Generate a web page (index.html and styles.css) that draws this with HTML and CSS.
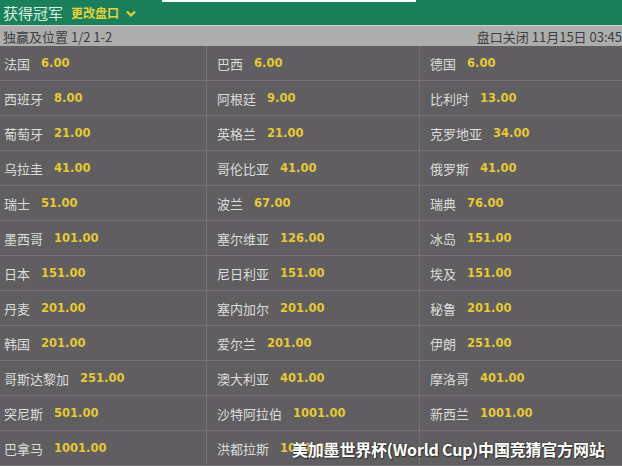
FILE: index.html
```html
<!DOCTYPE html>
<html lang="zh">
<head>
<meta charset="utf-8">
<link rel="stylesheet" href="styles.css">
</head>
<body>
<div class="page">
  <div class="topbar">
    <span class="title">获得冠军</span>
    <span class="change">更改盘口</span>
    <svg class="chev" width="10" height="7" viewBox="0 0 10 7"><path d="M1 1.5 L5 5.5 L9 1.5" fill="none" stroke="#e8d23a" stroke-width="2.2"/></svg>
    <span class="whiteline"></span>
  </div>
  <div class="subbar">
    <span>独赢及位置 1/2 1-2</span>
    <span class="close">盘口关闭 11月15日 03:45</span>
  </div>
  <div class="grid">
    <div class="cell"><span class="n">法国</span><span class="o">6.00</span></div>
    <div class="cell"><span class="n">巴西</span><span class="o">6.00</span></div>
    <div class="cell"><span class="n">德国</span><span class="o">6.00</span></div>
    <div class="cell"><span class="n">西班牙</span><span class="o">8.00</span></div>
    <div class="cell"><span class="n">阿根廷</span><span class="o">9.00</span></div>
    <div class="cell"><span class="n">比利时</span><span class="o">13.00</span></div>
    <div class="cell"><span class="n">葡萄牙</span><span class="o">21.00</span></div>
    <div class="cell"><span class="n">英格兰</span><span class="o">21.00</span></div>
    <div class="cell"><span class="n">克罗地亚</span><span class="o">34.00</span></div>
    <div class="cell"><span class="n">乌拉圭</span><span class="o">41.00</span></div>
    <div class="cell"><span class="n">哥伦比亚</span><span class="o">41.00</span></div>
    <div class="cell"><span class="n">俄罗斯</span><span class="o">41.00</span></div>
    <div class="cell"><span class="n">瑞士</span><span class="o">51.00</span></div>
    <div class="cell"><span class="n">波兰</span><span class="o">67.00</span></div>
    <div class="cell"><span class="n">瑞典</span><span class="o">76.00</span></div>
    <div class="cell"><span class="n">墨西哥</span><span class="o">101.00</span></div>
    <div class="cell"><span class="n">塞尔维亚</span><span class="o">126.00</span></div>
    <div class="cell"><span class="n">冰岛</span><span class="o">151.00</span></div>
    <div class="cell"><span class="n">日本</span><span class="o">151.00</span></div>
    <div class="cell"><span class="n">尼日利亚</span><span class="o">151.00</span></div>
    <div class="cell"><span class="n">埃及</span><span class="o">151.00</span></div>
    <div class="cell"><span class="n">丹麦</span><span class="o">201.00</span></div>
    <div class="cell"><span class="n">塞内加尔</span><span class="o">201.00</span></div>
    <div class="cell"><span class="n">秘鲁</span><span class="o">201.00</span></div>
    <div class="cell"><span class="n">韩国</span><span class="o">201.00</span></div>
    <div class="cell"><span class="n">爱尔兰</span><span class="o">201.00</span></div>
    <div class="cell"><span class="n">伊朗</span><span class="o">251.00</span></div>
    <div class="cell"><span class="n">哥斯达黎加</span><span class="o">251.00</span></div>
    <div class="cell"><span class="n">澳大利亚</span><span class="o">401.00</span></div>
    <div class="cell"><span class="n">摩洛哥</span><span class="o">401.00</span></div>
    <div class="cell"><span class="n">突尼斯</span><span class="o">501.00</span></div>
    <div class="cell"><span class="n">沙特阿拉伯</span><span class="o">1001.00</span></div>
    <div class="cell"><span class="n">新西兰</span><span class="o">1001.00</span></div>
    <div class="cell"><span class="n">巴拿马</span><span class="o">1001.00</span></div>
    <div class="cell"><span class="n">洪都拉斯</span><span class="o">1001.00</span></div>
    <div class="cell"></div>
  </div>
  <div class="watermark">美加墨世界杯(World Cup)中国竞猜官方网站</div>
</div>
</body>
</html>
```
FILE: styles.css
```css
html, body {
  margin: 0;
  padding: 0;
  background: #605e60;
}
.page {
  position: relative;
  width: 622px;
  height: 466px;
  overflow: hidden;
  font-family: "Noto Sans CJK SC", "DejaVu Sans", sans-serif;
}
.topbar {
  position: relative;
  height: 25px;
  background: #19805a;
  display: flex;
  align-items: center;
  padding-left: 3px;
}
.whiteline {
  position: absolute;
  top: 0;
  left: 162px;
  width: 254px;
  height: 2px;
  background: #ffffff;
}
.title {
  font-size: 15px;
  color: #d9efe2;
  line-height: 25px;
}
.change {
  margin-left: 8px;
  font-size: 12px;
  font-weight: bold;
  color: #e8d23a;
}
.chev {
  margin-left: 7px;
  margin-top: 1px;
}
.subbar {
  height: 21px;
  background: #adadad;
  display: flex;
  justify-content: space-between;
  align-items: center;
  padding-left: 3px;
  font-size: 13px;
  color: #3d3d3d;
  border-top: 1px solid #cfcfcf;
  box-sizing: border-box;
}
.close {
  margin-right: 0;
}
.grid {
  display: grid;
  grid-template-columns: 207px 213px 202px;
  grid-auto-rows: 35px;
}
.cell {
  display: flex;
  align-items: center;
  padding-left: 4px;
  border-bottom: 1px solid #737173;
  border-right: 1px solid #737173;
  box-sizing: border-box;
}
.cell:nth-child(3n) {
  border-right: none;
}
.cell:nth-child(3n+2), .cell:nth-child(3n) {
  padding-left: 10px;
}
.n {
  font-size: 13px;
  color: #dcdcdc;
}
.o {
  margin-left: 11px;
  font-family: "DejaVu Sans", sans-serif;
  font-weight: bold;
  font-size: 11.5px;
  color: #e6c935;
}
.watermark {
  position: absolute;
  left: 292px;
  top: 437px;
  font-family: "Noto Sans CJK SC", sans-serif;
  font-weight: bold;
  font-size: 16px;
  color: #ffffff;
  letter-spacing: -0.2px;
  text-shadow: 0 0 2px #333, 1px 1px 1px #333;
}
```
